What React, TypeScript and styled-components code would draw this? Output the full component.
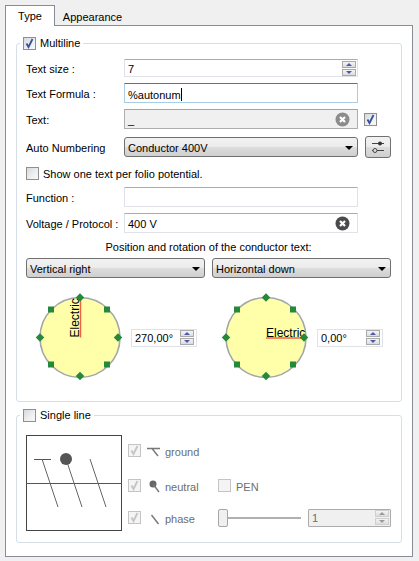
import React from 'react';
import styled, { createGlobalStyle } from 'styled-components';

const GlobalStyle = createGlobalStyle`
  html, body { margin: 0; padding: 0; background: #f0f0f0; }
  body { font-family: 'Liberation Sans', Arial, sans-serif; font-size: 11px; color: #000; }
`;

const Window = styled.div`
  width: 419px;
  height: 561px;
  box-sizing: border-box;
  padding: 5px 6px 4px 5px;
  display: flex;
  flex-direction: column;
  overflow: hidden;
`;

const TabBar = styled.div`
  display: flex;
  height: 20px;
  flex: none;
`;

const Tab = styled.div<{ $active?: boolean }>`
  box-sizing: border-box;
  position: relative;
  z-index: 1;
  display: flex;
  align-items: center;
  justify-content: center;
  height: ${p => (p.$active ? '21px' : '20px')};
  width: ${p => (p.$active ? '50px' : '75px')};
  padding-top: ${p => (p.$active ? '0' : '3px')};
  background: ${p => (p.$active ? '#fff' : '#f0f0f0')};
  border: ${p => (p.$active ? '1px solid #898c95' : 'none')};
  border-bottom: none;
`;

const Pane = styled.div`
  flex: 1;
  box-sizing: border-box;
  background: #fff;
  border: 1px solid #898c95;
  padding: 9px 10px 0;
  display: flex;
  flex-direction: column;
  gap: 5px;
`;

const Group = styled.fieldset<{ $height: number }>`
  margin: 0;
  min-width: 0;
  height: ${p => p.$height}px;
  box-sizing: border-box;
  border: 1px solid #d5dfe5;
  border-radius: 3px;
  padding: 0 10px 0 9px;
`;

const Legend = styled.legend`
  display: flex;
  align-items: center;
  gap: 4px;
  height: 16px;
  padding: 0 3px;
  margin-left: -6px;
`;

const Row = styled.div<{ $top?: number }>`
  display: flex;
  align-items: center;
  margin-top: ${p => p.$top ?? 0}px;
`;

const Label = styled.span`
  width: 98px;
  flex: none;
  padding-top: 2px;
  white-space: nowrap;
`;

const Field = styled.div<{ $variant?: 'plain' | 'focus' | 'disabled'; $h?: number }>`
  box-sizing: border-box;
  width: 234px;
  height: ${p => p.$h ?? 20}px;
  flex: none;
  display: flex;
  align-items: center;
  padding: 0 1px 0 3px;
  background: ${p => (p.$variant === 'disabled' ? '#f0f0f0' : '#fff')};
  border: 1px solid ${p => (p.$variant === 'disabled' ? '#adadad' : '#dfe3e8')};
  border-top-color: ${p => (p.$variant === 'disabled' ? '#a3a3a3' : '#ababab')};
  ${p => p.$variant === 'focus' && 'border-color: #a6cde4; border-top-color: #3d7bad;'}
  border-radius: 1px;
`;

const FieldText = styled.span`
  flex: 1;
  padding-top: 2px;
  white-space: nowrap;
`;

const Caret = styled.span`
  display: inline-block;
  width: 1px;
  height: 13px;
  background: #000;
  vertical-align: -2px;
`;

const Spin = styled.div`
  display: flex;
  flex-direction: column;
  gap: 1px;
  flex: none;
`;

const SpinButton = styled.div<{ $muted?: boolean }>`
  width: 14px;
  height: 7px;
  box-sizing: border-box;
  border: 1px solid ${p => (p.$muted ? '#d0d0d0' : '#a9a9a9')};
  background: linear-gradient(#f4f4f4, #dcdcdc);
  display: flex;
  align-items: center;
  justify-content: center;
`;

const Arrow = styled.i<{ $down?: boolean; $muted?: boolean }>`
  width: 0;
  height: 0;
  border-left: 3px solid transparent;
  border-right: 3px solid transparent;
  ${p => (p.$down ? 'border-top' : 'border-bottom')}: 3px solid ${p => (p.$muted ? '#9a9a9a' : '#4a5aa8')};
`;

const Combo = styled.div<{ $w: number }>`
  box-sizing: border-box;
  width: ${p => p.$w}px;
  height: 20px;
  flex: none;
  display: flex;
  align-items: center;
  justify-content: space-between;
  padding: 2px 4px 0 3px;
  border: 1px solid #707070;
  border-radius: 3px;
  background: linear-gradient(#f2f2f2 0%, #ebebeb 48%, #dddddd 50%, #cfcfcf 100%);
`;

const ComboArrow = styled.i`
  width: 0;
  height: 0;
  border-left: 4px solid transparent;
  border-right: 4px solid transparent;
  border-top: 4px solid #000;
`;

const Box = styled.span<{ $disabled?: boolean }>`
  box-sizing: border-box;
  display: inline-flex;
  width: 13px;
  height: 13px;
  flex: none;
  border: 1px solid ${p => (p.$disabled ? '#c4c4c4' : '#8e8f8f')};
  background: ${p =>
    p.$disabled ? '#f4f4f4' : 'linear-gradient(135deg, #d6d9dd 0%, #eef0f2 60%, #f8f8f8 100%)'};
`;

const BoxSlot = styled.span`
  display: inline-flex;
  margin-left: 6px;
`;

const CheckLabel = styled.span`
  margin-left: 4px;
  white-space: nowrap;
`;

const ToolButton = styled.div`
  box-sizing: border-box;
  width: 26px;
  height: 22px;
  margin-left: 7px;
  border: 1px solid #707070;
  border-radius: 3px;
  background: linear-gradient(#f2f2f2 0%, #ebebeb 48%, #dddddd 50%, #cfcfcf 100%);
  display: flex;
  align-items: center;
  justify-content: center;
`;

const CenterLabel = styled.div`
  text-align: center;
  margin-top: 6px;
  height: 14px;
  line-height: 16px;
`;

const Combos = styled.div`
  display: flex;
  gap: 7px;
  margin-top: 5px;
`;

const Dials = styled.div`
  display: flex;
  margin-top: 14px;
  padding-left: 9px;
`;

const Dial = styled.div<{ $w: number }>`
  width: ${p => p.$w}px;
  flex: none;
  display: flex;
  align-items: center;
  gap: 6px;
`;

const AngleBox = styled.div`
  box-sizing: border-box;
  width: 66px;
  height: 18px;
  flex: none;
  display: flex;
  align-items: center;
  justify-content: space-between;
  padding: 0 2px 0 3px;
  border: 1px solid #dfe3e8;
  background: #fff;
  margin-top: 1px;
`;

const LineBody = styled.div`
  display: flex;
  margin-top: 12px;
  gap: 6px;
`;

const Diagram = styled.svg`
  width: 96px;
  height: 96px;
  flex: none;
  display: block;
`;

const Options = styled.div`
  display: flex;
  flex-direction: column;
  padding-top: 9px;
  width: 264px;
`;

const OptionRow = styled.div<{ $top?: number }>`
  display: flex;
  align-items: center;
  height: 13px;
  margin-top: ${p => p.$top ?? 0}px;
`;

const Icon = styled.svg`
  width: 13px;
  height: 13px;
  margin-left: 6px;
  flex: none;
  overflow: visible;
`;

const DimLabel = styled.span`
  color: #6d6d6d;
  margin-left: 5px;
  padding-top: 2px;
  width: 48px;
  flex: none;
`;

const Slider = styled.div`
  position: relative;
  width: 83px;
  height: 18px;
  flex: none;
  margin-left: 5px;
  display: flex;
  align-items: center;
`;

const SliderTrack = styled.div`
  width: 100%;
  height: 2px;
  background: #b0b0b0;
`;

const SliderThumb = styled.div`
  position: absolute;
  left: 0;
  top: 0;
  box-sizing: border-box;
  width: 10px;
  height: 18px;
  border: 1px solid #a6a6a6;
  border-radius: 2px;
  background: #f0f0f0;
`;

const PenBox = styled.span`
  display: inline-flex;
  margin-left: 5px;
`;

const ValueBox = styled.div`
  box-sizing: border-box;
  width: 83px;
  height: 18px;
  flex: none;
  margin-left: 7px;
  display: flex;
  align-items: center;
  justify-content: space-between;
  padding: 0 1px 0 3px;
  border: 1px solid #ababab;
  border-radius: 1px;
  background: #f0f0f0;
  color: #6d6d6d;
`;

const ClearGlyph = styled.svg`
  width: 15px;
  height: 15px;
  margin-right: 6px;
  flex: none;
`;

const Check = ({ checked, disabled }: { checked?: boolean; disabled?: boolean }) => (
  <Box $disabled={disabled}>
    {checked && (
      <svg width="11" height="11" viewBox="0 0 11 11">
        <path
          d="M2.5 5.5 L4.5 9 L8.5 1"
          fill="none"
          stroke={disabled ? '#c4c4c4' : '#39509e'}
          strokeWidth="1.8"
        />
      </svg>
    )}
  </Box>
);

const Spinner = ({ muted }: { muted?: boolean }) => (
  <Spin>
    <SpinButton $muted={muted}><Arrow $muted={muted} /></SpinButton>
    <SpinButton $muted={muted}><Arrow $down $muted={muted} /></SpinButton>
  </Spin>
);

const ClearIcon = ({ color }: { color: string }) => (
  <ClearGlyph viewBox="0 0 15 15">
    <circle cx="7.5" cy="7.5" r="7" fill={color} />
    <path d="M5 5 L10 10 M10 5 L5 10" stroke="#fff" strokeWidth="2.2" />
  </ClearGlyph>
);

// handles around the rotation dial, offsets from the centre
const diamonds = [[0, -40], [0, 38.5], [-40, 0], [38, 0]];
const squares = [[-29, -28], [27, -28], [-29, 27], [27, 27]];

const RotationDial = ({ vertical }: { vertical?: boolean }) => (
  <svg width="90" height="90" viewBox="-45 -45.5 90 90">
    <circle cx="0" cy="0" r="40" fill="#ffffaa" stroke="#a2a8a8" strokeWidth="1.6" />
    {vertical ? (
      <line x1="0.5" y1="0" x2="0.5" y2="-40" stroke="#f4603c" strokeWidth="1.4" />
    ) : (
      <line x1="0" y1="0.5" x2="40" y2="0.5" stroke="#f4603c" strokeWidth="1.4" />
    )}
    <text
      x="0"
      y="-1"
      fontFamily="Liberation Sans, Arial, sans-serif"
      fontSize="12"
      fill="#000"
      transform={vertical ? 'rotate(-90)' : undefined}
    >
      Electric
    </text>
    {diamonds.map(([x, y]) => (
      <rect
        key={`${x}${y}`}
        x={x - 3}
        y={y - 3}
        width="6"
        height="6"
        fill="#25883a"
        transform={`rotate(45 ${x} ${y})`}
      />
    ))}
    {squares.map(([x, y]) => (
      <rect key={`${x}${y}`} x={x - 3} y={y - 3} width="6" height="6" fill="#25883a" />
    ))}
  </svg>
);

const App: React.FC = () => (
  <Window>
    <GlobalStyle />
    <TabBar>
      <Tab $active>Type</Tab>
      <Tab>Appearance</Tab>
    </TabBar>
    <Pane>
      <Group $height={367}>
        <Legend><Check checked />Multiline</Legend>
        <Row $top={8}>
          <Label>Text size :</Label>
          <Field $h={18}>
            <FieldText>7</FieldText>
            <Spinner />
          </Field>
        </Row>
        <Row $top={6}>
          <Label>Text Formula :</Label>
          <Field $variant="focus">
            <FieldText>%autonum<Caret /></FieldText>
          </Field>
        </Row>
        <Row $top={6}>
          <Label>Text:</Label>
          <Field $variant="disabled">
            <FieldText>_</FieldText>
            <ClearIcon color="#8c8c8c" />
          </Field>
          <BoxSlot><Check checked /></BoxSlot>
        </Row>
        <Row $top={7}>
          <Label>Auto Numbering</Label>
          <Combo $w={234}>
            Conductor 400V
            <ComboArrow />
          </Combo>
          <ToolButton>
            <svg width="14" height="12" viewBox="0 0 14 12">
              <path d="M1 2.5 H13 M1 9.5 H13" stroke="#444" strokeWidth="1" />
              <circle cx="9" cy="2.5" r="2" fill="#333" />
              <circle cx="4" cy="9.5" r="2" fill="#ddd" stroke="#444" />
            </svg>
          </ToolButton>
        </Row>
        <Row $top={9}>
          <Check />
          <CheckLabel>Show one text per folio potential.</CheckLabel>
        </Row>
        <Row $top={7}>
          <Label>Function :</Label>
          <Field />
        </Row>
        <Row $top={6}>
          <Label>Voltage / Protocol :</Label>
          <Field>
            <FieldText>400 V</FieldText>
            <ClearIcon color="#4a4a4a" />
          </Field>
        </Row>
        <CenterLabel>Position and rotation of the conductor text:</CenterLabel>
        <Combos>
          <Combo $w={179}>Vertical right<ComboArrow /></Combo>
          <Combo $w={179}>Horizontal down<ComboArrow /></Combo>
        </Combos>
        <Dials>
          <Dial $w={186}>
            <RotationDial vertical />
            <AngleBox>270,00°<Spinner /></AngleBox>
          </Dial>
          <Dial $w={170}>
            <RotationDial />
            <AngleBox>0,00°<Spinner /></AngleBox>
          </Dial>
        </Dials>
      </Group>
      <Group $height={136}>
        <Legend><Check />Single line</Legend>
        <LineBody>
          <Diagram viewBox="0 0 96 96">
            <rect x="0.5" y="0.5" width="95" height="95" fill="#fff" stroke="#444" />
            <path d="M0 48.5 H96" stroke="#555" />
            <path d="M8 24.5 H25" stroke="#555" />
            <path d="M16 24 L32 72 M40 24 L56 72 M64 24 L80 72" stroke="#666" fill="none" />
            <circle cx="40" cy="24" r="6" fill="#555" />
          </Diagram>
          <Options>
            <OptionRow>
              <Check checked disabled />
              <Icon viewBox="0 0 13 13">
                <path d="M0 4.5 H13 M5 4.5 L11 12" stroke="#777" strokeWidth="1.4" fill="none" />
              </Icon>
              <DimLabel>ground</DimLabel>
            </OptionRow>
            <OptionRow $top={22}>
              <Check checked disabled />
              <Icon viewBox="0 0 13 13">
                <circle cx="6" cy="5" r="3.5" fill="#666" />
                <path d="M6 5 L12 13" stroke="#777" strokeWidth="1.4" />
              </Icon>
              <DimLabel>neutral</DimLabel>
              <PenBox><Check disabled /></PenBox>
              <DimLabel>PEN</DimLabel>
            </OptionRow>
            <OptionRow $top={19}>
              <Check checked disabled />
              <Icon viewBox="0 0 13 13">
                <path d="M4.5 4 L11.5 13" stroke="#777" strokeWidth="1.4" />
              </Icon>
              <DimLabel>phase</DimLabel>
              <Slider>
                <SliderTrack />
                <SliderThumb />
              </Slider>
              <ValueBox>1<Spinner muted /></ValueBox>
            </OptionRow>
          </Options>
        </LineBody>
      </Group>
    </Pane>
  </Window>
);

export default App;
